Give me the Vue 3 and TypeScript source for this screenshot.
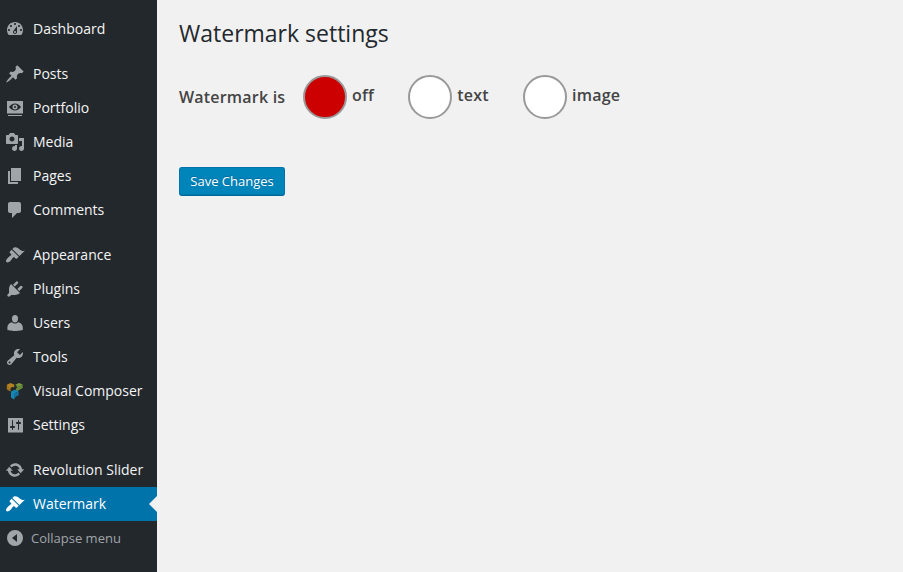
<script setup lang="ts">
import { ref } from 'vue'

interface MenuItem {
  label: string
  icon: string
}

const icons: Record<string, string> = {
  dashboard:
    'M3.76 16h12.48c1.1-1.37 1.76-3.11 1.76-5 0-4.42-3.58-8-8-8s-8 3.58-8 8c0 1.89.66 3.63 1.76 5zM10 4c.55 0 1 .45 1 1s-.45 1-1 1-1-.45-1-1 .45-1 1-1zM6 6c.55 0 1 .45 1 1s-.45 1-1 1-1-.45-1-1 .45-1 1-1zm8 0c.55 0 1 .45 1 1s-.45 1-1 1-1-.45-1-1 .45-1 1-1zm-5.37 5.55L12 7v6c0 1.1-.9 2-2 2s-2-.9-2-2c0-.57.24-1.08.63-1.45zM4 10c.55 0 1 .45 1 1s-.45 1-1 1-1-.45-1-1 .45-1 1-1zm12 0c.55 0 1 .45 1 1s-.45 1-1 1-1-.45-1-1 .45-1 1-1zm-5 3c0-.55-.45-1-1-1s-1 .45-1 1 .45 1 1 1 1-.45 1-1z',
  pin: 'M10.44 3.02l1.82-1.82 6.36 6.35-1.83 1.82c-1.05-.68-2.48-.57-3.41.36l-.75.75c-.92.93-1.04 2.35-.35 3.41l-1.83 1.82-2.41-2.41-2.8 2.79c-.42.42-3.38 2.71-3.8 2.29s1.86-3.39 2.28-3.81l2.79-2.79L4.1 9.36l1.83-1.82c1.05.69 2.48.57 3.4-.36l.75-.75c.93-.92 1.05-2.35.36-3.41z',
  portfolio:
    'M18 14.200V3H2v12.500h16zM10 5.500c2.300 0 4.400 1.300 6 3.500-1.600 2.200-3.700 3.500-6 3.500S5.600 11.200 4 9c1.600-2.200 3.700-3.500 6-3.500zM10 6.500a2.500 2.500 0 1 0 0 5 2.500 2.500 0 1 0 0-5zM10 8a1 1 0 1 1 0 2 1 1 0 1 1 0-2zM17 17v1H3v-1z',
  media:
    'M13 11V4c0-.55-.45-1-1-1h-1.67L9 1H5L3.67 3H2c-.55 0-1 .45-1 1v7c0 .55.45 1 1 1h10c.55 0 1-.45 1-1zM7 4.5c1.38 0 2.5 1.12 2.5 2.5S8.38 9.5 7 9.5 4.5 8.38 4.5 7 5.62 4.5 7 4.5zM14 6h5v10.5c0 1.38-1.12 2.5-2.5 2.5S14 17.88 14 16.5s1.12-2.5 2.5-2.5c.17 0 .34.02.5.05V9h-3V6zm-4 8.05V13h2v3.5c0 1.38-1.12 2.5-2.5 2.5S7 17.88 7 16.5 8.12 14 9.5 14c.17 0 .34.02.5.05z',
  pages: 'M6 15V2h10v13H6zm-1 1h8v2H3V5h2v11z',
  comments: 'M5 2h9c1.1 0 2 .9 2 2v7c0 1.1-.9 2-2 2h-2l-5 5v-5H5c-1.1 0-2-.9-2-2V4c0-1.1.9-2 2-2z',
  brush:
    'M14.48 11.06L7.41 3.99l1.5-1.5c.5-.56 2.3-.47 3.51.32 1.21.8 1.43 1.28 2.91 2.1 1.18.64 2.45 1.26 4.45.85zm-.71.71L6.7 4.7 4.93 6.47c-.39.39-.39 1.02 0 1.41l1.06 1.06c.39.39.39 1.03 0 1.42-.6.6-1.43 1.11-2.21 1.69-.35.26-.7.53-1.01.84C1.43 14.23.4 16.08 1.4 17.07c.99 1 2.84-.03 4.18-1.36.31-.31.58-.66.85-1.02.57-.78 1.08-1.61 1.69-2.21.39-.39 1.02-.39 1.41 0l1.06 1.06c.39.39 1.02.39 1.41 0z',
  plug: 'M13.11 4.36L9.87 7.6 8 5.73l3.24-3.24c.35-.34 1.05-.2 1.56.32.52.51.66 1.21.31 1.55zm-8 1.77l.91-1.12 9.01 9.01-1.19.84c-.71.71-2.63 1.16-3.82 1.16H6.14L4.9 17.26c-.59.59-1.54.59-2.12 0-.59-.58-.59-1.53 0-2.12l1.24-1.24v-3.88c0-1.13.4-3.19 1.09-3.89zm7.26 3.97l3.24-3.24c.34-.35 1.04-.21 1.55.31.52.51.66 1.21.31 1.55l-3.24 3.25z',
  user: 'M10 9.400C7.700 9.400 7 7.300 7 5.400 7 3.400 8 2 10 2s3 1.400 3 3.400c0 1.900-.7 4-3 4zM7 9.300c.8.900 1.800 1.300 3 1.300s2.200-.4 3-1.300c2.600.3 4.800 2.500 4.800 5.200v2.600s-3.800 1-7.800 1-7.600-1-7.600-1v-2.600c0-2.700 2-4.900 4.600-5.200z',
  wrench:
    'M16.68 9.77c-1.34 1.34-3.3 1.67-4.95.99l-5.41 6.52c-.99.99-2.59.99-3.58 0s-.99-2.59 0-3.57l6.52-5.42c-.68-1.65-.35-3.61.99-4.95 1.28-1.28 3.12-1.62 4.72-1.06l-2.89 2.89 2.82 2.82 2.86-2.87c.53 1.58.18 3.39-1.08 4.65zM3.81 16.21c.4.39 1.04.39 1.43 0 .4-.4.4-1.04 0-1.43-.39-.4-1.03-.4-1.43 0-.39.39-.39 1.03 0 1.43z',
  sliders:
    'M18 17V3H3v14.500h15zM8 11h1c.55 0 1 .45 1 1s-.45 1-1 1H8v1.5c0 .28-.22.5-.5.5s-.5-.22-.5-.5V13H6c-.55 0-1-.45-1-1s.45-1 1-1h1V5.500c0-.28.22-.5.5-.5s.5.22.5.5V11zm5-2h-1c-.55 0-1-.45-1-1s.45-1 1-1h1V5.500c0-.28.22-.5.5-.5s.5.22.5.5V7h1c.55 0 1 .45 1 1s-.45 1-1 1h-1v5.500c0 .28-.22.5-.5.5s-.5-.22-.5-.5V9z',
  update:
    'M10.2 3.28c3.53 0 6.43 2.61 6.92 6h2.08l-3.5 4-3.5-4h2.32c-.45-1.97-2.21-3.45-4.32-3.45-1.45 0-2.73.71-3.54 1.78L4.95 5.66C6.23 4.2 8.11 3.28 10.2 3.28zm-.4 13.44c-3.52 0-6.43-2.61-6.92-6H.8l3.5-4c1.17 1.33 2.33 2.67 3.5 4H5.48c.45 1.97 2.21 3.45 4.32 3.45 1.45 0 2.73-.71 3.54-1.78l1.71 1.95c-1.28 1.46-3.15 2.38-5.25 2.38z',
}

const groups: MenuItem[][] = [
  [{ label: 'Dashboard', icon: 'dashboard' }],
  [
    { label: 'Posts', icon: 'pin' },
    { label: 'Portfolio', icon: 'portfolio' },
    { label: 'Media', icon: 'media' },
    { label: 'Pages', icon: 'pages' },
    { label: 'Comments', icon: 'comments' },
  ],
  [
    { label: 'Appearance', icon: 'brush' },
    { label: 'Plugins', icon: 'plug' },
    { label: 'Users', icon: 'user' },
    { label: 'Tools', icon: 'wrench' },
    { label: 'Visual Composer', icon: 'composer' },
    { label: 'Settings', icon: 'sliders' },
  ],
  [
    { label: 'Revolution Slider', icon: 'update' },
    { label: 'Watermark', icon: 'brush' },
  ],
]

const current = ref('Watermark')
const modes = ['off', 'text', 'image']
const mode = ref('off')
</script>

<template>
  <div class="admin">
    <nav class="sidebar">
      <ul v-for="(group, g) in groups" :key="g" class="group">
        <li
          v-for="item in group"
          :key="item.label"
          class="item"
          :class="{ current: item.label === current }"
          @click="current = item.label"
        >
          <svg v-if="item.icon === 'composer'" class="icon" viewBox="0 0 20 20">
            <path fill="#a3761c" d="M1.800 3.800 5.500 5.500v5L1.800 8.500z" />
            <path fill="#b5821f" d="M1.800 3.800 5.500 2 9.200 3.500V6.500L7 5.800 5.500 7.500z" />
            <path fill="#7c9c40" d="M10.300 3.800 14 2l3.700 1.500L14 5.500z" />
            <path fill="#668a38" d="M10.300 3.800 14 5.500l3.700-2V7L11.500 10.400l-.8-2.400 1.500-1.500z" />
            <path fill="#1686b4" d="M6 10.500 9.800 8.700l3.900 1.500-4 2.300v2.500L9 18.500 6 16.500z" />
            <path fill="#13729e" d="M9.700 12.300l4-2.100v4L11 15.500 9 18.500z" />
          </svg>
          <svg v-else class="icon" viewBox="0 0 20 20">
            <path fill="currentColor" fill-rule="evenodd" :d="icons[item.icon]" />
          </svg>
          <span class="label">{{ item.label }}</span>
        </li>
      </ul>
      <div class="collapse">
        <svg class="icon" viewBox="0 0 20 20">
          <path fill="currentColor" fill-rule="evenodd" d="M10 2a8 8 0 1 0 0 16 8 8 0 1 0 0-16zM12 6v8l-5-4z" />
        </svg>
        <span class="label">Collapse menu</span>
      </div>
    </nav>
    <main class="content">
      <h2 class="title">Watermark settings</h2>
      <div class="modes">
        <span class="lead">Watermark is</span>
        <label v-for="m in modes" :key="m" class="mode" @click="mode = m">
          <span class="dot" :class="{ on: m === mode }"></span>
          <span class="name">{{ m }}</span>
        </label>
      </div>
      <button class="save" type="button">Save Changes</button>
    </main>
  </div>
</template>

<style>
body {
  background: #f1f1f1;
}
</style>

<style scoped>
.admin {
  display: flex;
  height: 572px;
  overflow: hidden;
  background: #f1f1f1;
  font-family: 'Open Sans', sans-serif;
}
.sidebar {
  box-sizing: border-box;
  flex: none;
  width: 157px;
  padding-top: 12px;
  background: #23282d;
}
.group {
  margin: 0 0 11px;
  padding: 0;
  list-style: none;
}
.group:last-of-type {
  margin-bottom: 0;
}
.item,
.collapse {
  position: relative;
  display: flex;
  align-items: center;
  height: 34px;
  padding-left: 5px;
  color: #a0a5aa;
  white-space: nowrap;
  cursor: pointer;
}
.icon {
  flex: none;
  width: 20px;
  height: 20px;
}
.item .label {
  margin-left: 8px;
  color: #f4f4f4;
  font-size: 14px;
  line-height: 18px;
}
.item.current {
  background: #0073aa;
  color: #fff;
}
.item.current .label {
  color: #fff;
}
.item.current::after {
  content: '';
  position: absolute;
  top: 9px;
  right: 0;
  border: 8px solid transparent;
  border-left-width: 0;
  border-right-color: #f1f1f1;
}
.collapse .label {
  margin-left: 6px;
  font-size: 13px;
  color: #a0a5aa;
}
.content {
  flex: 1;
  padding: 19px 22px 0;
  color: #444;
}
.title {
  margin: 0;
  color: #23282d;
  font-size: 23px;
  font-weight: 400;
  line-height: 29px;
}
.modes {
  display: flex;
  align-items: center;
  height: 44px;
  margin-top: 27px;
  font-size: 16px;
  font-weight: 600;
  letter-spacing: 0.2px;
  line-height: 22px;
}
.lead {
  width: 124px;
}
.mode {
  display: flex;
  align-items: center;
  margin-right: 34.3px;
}
.dot {
  box-sizing: border-box;
  width: 44px;
  height: 44px;
  border: 2px solid #999;
  border-radius: 50%;
  background: #fff;
}
.dot.on {
  background: #c00;
}
.name {
  margin-left: 5px;
  padding-bottom: 4px;
}
.save {
  display: block;
  box-sizing: border-box;
  width: 106px;
  height: 29px;
  margin-top: 48px;
  padding: 0 0 1px;
  border: 1px solid #0073aa;
  border-bottom-color: #006799;
  border-radius: 3px;
  background: #0085ba;
  box-shadow: inset 0 -1px 0 #0078a8;
  color: #fff;
  font-family: inherit;
  font-size: 13px;
  text-shadow: 0 -1px 1px #006799;
}
</style>
